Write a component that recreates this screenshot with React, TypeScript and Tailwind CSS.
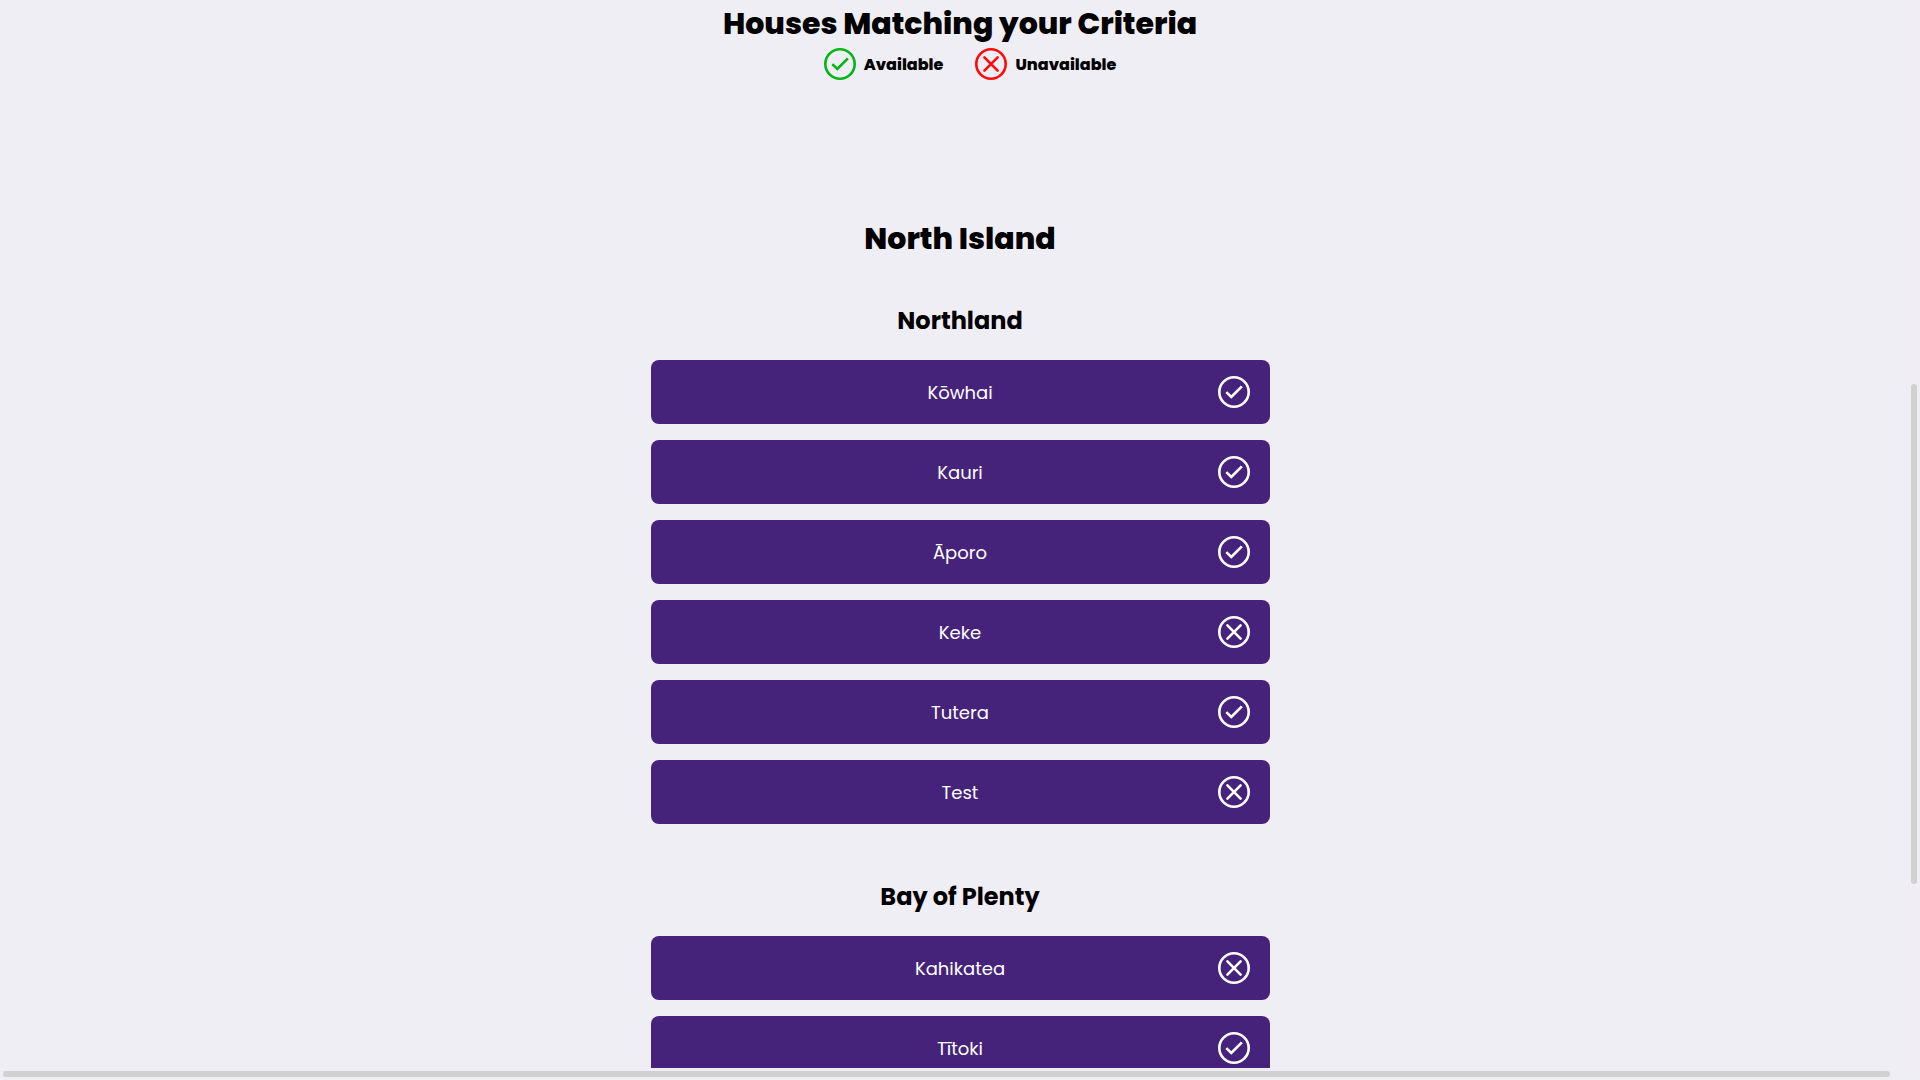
type House = { name: string; available: boolean };
type Region = { name: string; houses: House[] };

const regions: Region[] = [
  {
    name: 'Northland',
    houses: [
      { name: 'Kōwhai', available: true },
      { name: 'Kauri', available: true },
      { name: 'Āporo', available: true },
      { name: 'Keke', available: false },
      { name: 'Tutera', available: true },
      { name: 'Test', available: false },
    ],
  },
  {
    name: 'Bay of Plenty',
    houses: [
      { name: 'Kahikatea', available: false },
      { name: 'Tītoki', available: true },
    ],
  },
];

function StatusIcon({ available, className }: { available: boolean; className: string }) {
  return (
    <svg viewBox="0 0 32 32" fill="none" stroke="currentColor" strokeWidth="2.6" aria-hidden="true" className={className}>
      <circle cx="16" cy="16" r="14.7" />
      {available ? (
        <path d="M8.3 16.1 13.3 21 23.9 10.4" />
      ) : (
        <path d="M9.4 9.4 22.6 22.6M22.6 9.4 9.4 22.6" strokeLinecap="round" />
      )}
    </svg>
  );
}

function HouseRow({ house }: { house: House }) {
  return (
    <li>
      <button
        type="button"
        aria-label={house.name + (house.available ? ', available' : ', unavailable')}
        className="grid h-16 w-full grid-cols-[32px_1fr_32px] items-center rounded-lg bg-[#45237b] px-5 text-lg text-white"
      >
        <span className="col-start-2 pt-0.5">{house.name}</span>
        <StatusIcon available={house.available} className="size-8" />
      </button>
    </li>
  );
}

export default function App() {
  return (
    <div className="grid h-screen grid-cols-[minmax(0,1fr)_12px] grid-rows-[minmax(0,1fr)_12px] overflow-hidden bg-[#efeef4] font-['Poppins','Inter',sans-serif] text-black">
      <main className="overflow-hidden pl-3">
        <h1 className="pt-1 text-center text-3xl leading-10 font-extrabold">Houses Matching your Criteria</h1>
        <div className="mt-1 flex justify-center gap-8 pl-5 text-base font-extrabold">
          <div className="flex items-center gap-2">
            <StatusIcon available className="size-8 text-[#00b615]" />
            <span className="pt-0.5">Available</span>
          </div>
          <div className="flex items-center gap-2">
            <StatusIcon available={false} className="size-8 text-[#ff0a0a]" />
            <span className="pt-0.5">Unavailable</span>
          </div>
        </div>
        <h2 className="mt-[139px] text-center text-3xl leading-10 font-extrabold">North Island</h2>
        <div className="mx-auto mt-11 flex max-w-[619px] flex-col gap-[55px]">
          {regions.map((region) => (
            <section key={region.name}>
              <h3 className="text-center text-2xl leading-9 font-bold">{region.name}</h3>
              <ul className="mt-[21px] flex flex-col gap-4">
                {region.houses.map((house) => (
                  <HouseRow key={house.name} house={house} />
                ))}
              </ul>
            </section>
          ))}
        </div>
      </main>
      <div className="flex flex-col items-center bg-[#f0edf4] pt-96">
        <div className="h-[500px] w-1.5 rounded-full bg-[#d1d1d1]" />
      </div>
      <div className="flex items-center pr-[18px] pl-[3px]">
        <div className="h-1.5 w-full rounded-full bg-[#d1d1d1]" />
      </div>
      <div />
    </div>
  );
}
